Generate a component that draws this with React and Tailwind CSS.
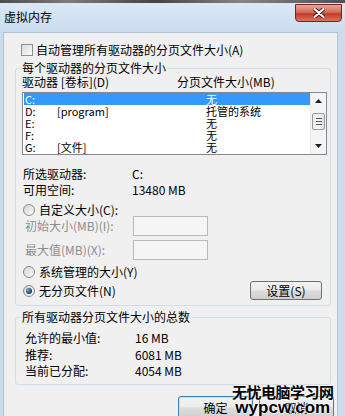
import React from "react";

const drives = [
  { d: "C:", label: "", size: "无", sel: true },
  { d: "D:", label: "[program]", size: "托管的系统" },
  { d: "E:", label: "", size: "无" },
  { d: "F:", label: "", size: "无" },
  { d: "G:", label: "[文件]", size: "无" },
];

function Radio({ checked }) {
  return (
    <span className="w-[12px] h-[12px] rounded-full border border-[#8c8c8c] bg-[linear-gradient(135deg,#d4d4d4,#fafafa)] flex items-center justify-center shrink-0">
      {checked && <span className="w-[6px] h-[6px] rounded-full bg-[radial-gradient(circle_at_35%_35%,#7ea3cc,#163a63_70%)]" />}
    </span>
  );
}

function Btn({ children, className = "" }) {
  return (
    <div
      className={
        "flex items-center justify-center rounded-[3px] border bg-[linear-gradient(#f3f3f3,#ebebeb_48%,#dcdcdc_52%,#cfcfcf)] " +
        className
      }
    >
      {children}
    </div>
  );
}

function Scrollbar() {
  return (
    <div className="w-[16px] flex flex-col bg-[#f4f4f4] border-l border-[#ececec]">
      <div className="h-[16px] flex items-center justify-center">
        <svg width="7" height="4" viewBox="0 0 7 4">
          <polygon points="0,4 3.5,0 7,4" fill="#1e1e1e" />
        </svg>
      </div>
      <div className="mt-[4px] mx-[1px] h-[17px] rounded-[2px] border border-[#9a9a9a] bg-[linear-gradient(90deg,#eaeaea,#f8f8f8_50%,#dedede)] flex flex-col items-center justify-center gap-[2px]">
        <span className="w-[6px] h-[1px] bg-[#555]" />
        <span className="w-[6px] h-[1px] bg-[#555]" />
        <span className="w-[6px] h-[1px] bg-[#555]" />
      </div>
      <div className="flex-1" />
      <div className="h-[16px] flex items-center justify-center">
        <svg width="7" height="4" viewBox="0 0 7 4">
          <polygon points="0,0 7,0 3.5,4" fill="#1e1e1e" />
        </svg>
      </div>
    </div>
  );
}

export default function App() {
  return (
    <div className="relative w-[345px] h-[416px] overflow-hidden flex flex-col bg-[#cddced] text-[12px] leading-[12px] text-black font-['Noto_Sans_CJK_SC',sans-serif]">
      {/* strip of the window behind */}
      <div className="h-[3px] shrink-0 bg-[linear-gradient(90deg,#4d4d4d,#7c7c7c_20%,#444_45%,#858585_70%,#505050)]" />

      {/* title bar */}
      <div className="h-[29px] shrink-0 flex items-start bg-[linear-gradient(180deg,#dbe8f6,#cbdcef)]">
        <span className="ml-[4px] mt-[8px]">虚拟内存</span>
        <div className="ml-auto mr-[3px] mt-[1px] w-[47px] h-[18px] rounded-b-[4px] border border-[#6e2519] bg-[linear-gradient(#e9a694,#d46d5a_45%,#c0392a_55%,#d9765f)] flex items-center justify-center">
          <svg width="12" height="10" viewBox="0 0 12 10">
            <path d="M1.5 1 L10.5 9 M10.5 1 L1.5 9" stroke="#4a1a12" strokeWidth="4" strokeLinecap="round" />
            <path d="M1.5 1 L10.5 9 M10.5 1 L1.5 9" stroke="#ffffff" strokeWidth="2.2" strokeLinecap="round" />
          </svg>
        </div>
      </div>

      {/* dialog body */}
      <div className="flex-1 ml-[3px] mr-[7px] bg-[#f0f0f0] border-t border-l border-r border-[#b3c3d6] flex flex-col">
        <div className="mt-[11px] ml-[17px] flex items-center gap-[3px] h-[12px]">
          <span className="w-[12px] h-[12px] border border-[#8e8f8f] bg-[linear-gradient(135deg,#dcdcdc,#fbfbfb)] shrink-0" />
          <span>自动管理所有驱动器的分页文件大小(A)</span>
        </div>

        <fieldset className="mt-[6px] ml-[11px] w-[316px] rounded-[3px] border border-[#d3dde4] pb-[5px]">
          <legend className="ml-[5px] px-[1px] leading-[12px]">每个驱动器的分页文件大小</legend>

          <div className="mt-[2px] ml-[6px] flex h-[12px]">
            <span className="w-[155px]">驱动器 [卷标](D)</span>
            <span>分页文件大小(MB)</span>
          </div>

          <div className="mt-[4px] ml-[6px] w-[305px] h-[63px] border border-[#828790] bg-white flex">
            <div className="flex-1 pl-[1px] text-[11px] leading-[12px]">
              {drives.map((r) => (
                <div key={r.d} className={`h-[12px] flex ${r.sel ? "bg-[#3399ff] text-white" : ""}`}>
                  <span className="w-[33px] pl-[1px]">{r.d}</span>
                  <span className="w-[149px]">{r.label}</span>
                  <span>{r.size}</span>
                </div>
              ))}
            </div>
            <Scrollbar />
          </div>

          <div className="mt-[13px] ml-[7px] flex h-[12px]">
            <span className="w-[109px]">所选驱动器:</span>
            <span>C:</span>
          </div>
          <div className="mt-[4px] ml-[7px] flex h-[12px]">
            <span className="w-[109px]">可用空间:</span>
            <span>13480 MB</span>
          </div>

          <div className="mt-[8px] ml-[7px] flex items-center gap-[4px] h-[12px]">
            <Radio />
            <span>自定义大小(C):</span>
          </div>
          <div className="ml-[9px] flex items-center h-[20px] text-[#8d8d8d]">
            <span className="w-[108px]">初始大小(MB)(I):</span>
            <span className="w-[75px] h-[20px] border border-[#b9b9b9] bg-[#f5f5f5]" />
          </div>
          <div className="mt-[4px] ml-[9px] flex items-center h-[20px] text-[#8d8d8d]">
            <span className="w-[108px]">最大值(MB)(X):</span>
            <span className="w-[75px] h-[20px] border border-[#b9b9b9] bg-[#f5f5f5]" />
          </div>

          <div className="mt-[6px] ml-[7px] flex items-center gap-[4px] h-[12px]">
            <Radio />
            <span>系统管理的大小(Y)</span>
          </div>
          <div className="mt-[3px] ml-[7px] flex items-center h-[19px]">
            <Radio checked />
            <span className="ml-[4px]">无分页文件(N)</span>
            <Btn className="ml-auto mr-[8px] w-[72px] h-[19px] border-[#707070]">设置(S)</Btn>
          </div>
        </fieldset>

        <fieldset className="mt-[5px] ml-[11px] w-[316px] rounded-[3px] border border-[#d3dde4] pb-[7px]">
          <legend className="ml-[5px] px-[1px] leading-[12px]">所有驱动器分页文件大小的总数</legend>
          <div className="mt-[9px] ml-[9px] flex h-[12px]">
            <span className="w-[110px]">允许的最小值:</span>
            <span>16 MB</span>
          </div>
          <div className="mt-[5px] ml-[9px] flex h-[12px]">
            <span className="w-[110px]">推荐:</span>
            <span>6081 MB</span>
          </div>
          <div className="mt-[4px] ml-[9px] flex h-[12px]">
            <span className="w-[110px]">当前已分配:</span>
            <span>4054 MB</span>
          </div>
        </fieldset>

        <div className="mt-[11px] flex justify-end gap-[6px] pr-[3px]">
          <Btn className="w-[75px] h-[23px] border-[#3c7fb1] shadow-[inset_0_0_0_1px_#c5e4f7]">确定</Btn>
          <Btn className="w-[75px] h-[23px] border-[#707070]">取消</Btn>
        </div>
      </div>

      {/* site watermark over the buttons */}
      <div className="absolute left-[232px] top-[382px] flex flex-col items-center">
        <span className="text-[15px] leading-[19px] font-bold tracking-[-0.5px] text-black [text-shadow:0_0_2px_#fff,0_0_2px_#fff]">
          无忧电脑学习网
        </span>
        <span className="-mt-[2px] text-[17px] leading-[17px] font-bold font-['Liberation_Sans',sans-serif] text-black [text-shadow:0_0_2px_#fff,0_0_2px_#fff,0_0_1px_#fff]">
          wypcw.com
        </span>
      </div>
    </div>
  );
}
